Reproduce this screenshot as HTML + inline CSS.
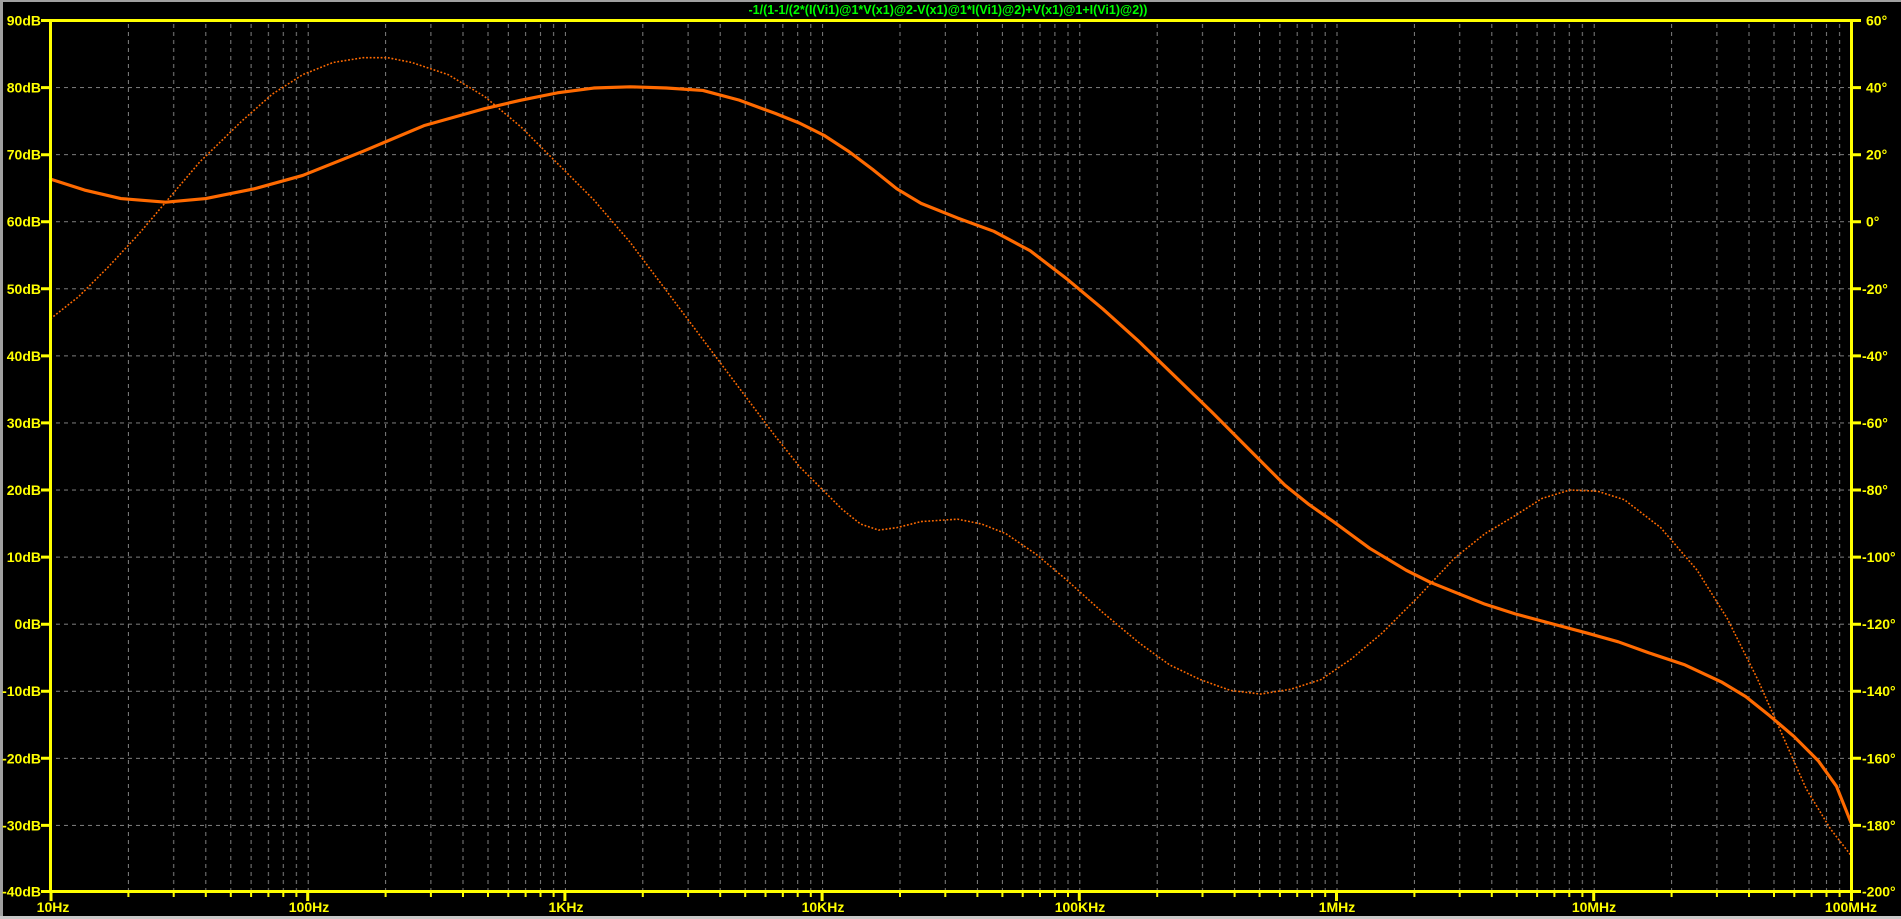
<!DOCTYPE html>
<html><head><meta charset="utf-8"><style>
html,body{margin:0;padding:0;background:#000;width:1901px;height:919px;overflow:hidden}
svg{display:block}
text{font-family:"Liberation Sans",sans-serif;font-weight:bold}
</style></head><body>
<svg width="1901" height="919" viewBox="0 0 1901 919" xmlns="http://www.w3.org/2000/svg">
<defs>
<pattern id="vg" patternUnits="userSpaceOnUse" x="50.5" y="0" width="257.2" height="919">
<g stroke="#808080" stroke-width="1" stroke-dasharray="4 4">
<line x1="0.5" y1="0" x2="0.5" y2="919"/>
<line x1="77.9" y1="0" x2="77.9" y2="919"/>
<line x1="123.2" y1="0" x2="123.2" y2="919"/>
<line x1="155.3" y1="0" x2="155.3" y2="919"/>
<line x1="180.3" y1="0" x2="180.3" y2="919"/>
<line x1="200.6" y1="0" x2="200.6" y2="919"/>
<line x1="217.9" y1="0" x2="217.9" y2="919"/>
<line x1="232.8" y1="0" x2="232.8" y2="919"/>
<line x1="245.9" y1="0" x2="245.9" y2="919"/>
</g></pattern>
<pattern id="hg" patternUnits="userSpaceOnUse" x="0" y="20" width="1901" height="67.077">
<line x1="0" y1="0.5" x2="1901" y2="0.5" stroke="#808080" stroke-width="1" stroke-dasharray="4 4"/>
</pattern>
</defs>
<rect x="0" y="0" width="1901" height="919" fill="#000"/>
<rect x="51" y="20" width="1800" height="872" fill="url(#vg)"/>
<rect x="51" y="20" width="1800" height="872" fill="url(#hg)"/>
<rect x="0" y="0" width="1901" height="2" fill="#a0a0a0"/>
<rect x="0" y="0" width="3" height="919" fill="#a0a0a0"/>
<rect x="0" y="916" width="1901" height="3" fill="#c8c8c8"/>

<g transform="translate(50.5,20) scale(1.2125,1.2145) translate(-42,-17)" fill="none">
<polyline stroke="#ff6a00" stroke-width="1.3" stroke-dasharray="1.5 1.5" stroke-linejoin="round"
points="42,263 65,245 90,220 115,193 137,167 165,134 200,100 225,78 250,62 275,52 300,48 320,48 340,52 370,62 400,80 430,105 460,135 490,165 520,200 550,240 580,280 610,320 640,360 660,385 680,405 695,420 710,432 725,437 740,435 760,430 790,428 810,432 830,440 855,457 880,478 910,505 940,530 965,548 990,560 1015,569 1040,572 1065,568 1090,560 1115,543 1140,522 1170,492 1200,460 1225,440 1250,425 1272,411 1295,404 1318,405 1340,412 1370,435 1400,470 1425,510 1450,560 1470,605 1490,650 1510,683 1527,705"/>
<polyline stroke="#ff6a00" stroke-width="2.6" stroke-linejoin="round" stroke-linecap="round"
points="42,148 70,157 100,164 137,167 170,164 210,156 250,145 300,125 350,104 400,90 430,83 460,77 490,73 520,72 550,73 580,75 610,83 640,94 660,102 680,112 700,125 720,140 740,156 760,168 790,180 820,191 850,207 880,230 910,255 940,282 970,311 1000,340 1030,370 1060,400 1080,416 1100,430 1130,452 1160,470 1180,480 1200,488 1225,498 1250,506 1280,514 1310,522 1335,529 1360,538 1390,548 1420,562 1440,574 1460,590 1480,607 1500,627 1515,648 1527,678"/>
</g>

<g fill="#ffff00">
<rect x="49" y="19" width="1805" height="3"/>
<rect x="49" y="890" width="1805" height="3"/>
<rect x="49" y="19" width="3" height="874"/>
<rect x="1850" y="19" width="3" height="874"/>
</g>
<g stroke="#ffff00" stroke-width="3">
<path d="M41 20.5H50M41 87.6H50M41 154.7H50M41 221.7H50M41 288.8H50M41 355.9H50M41 422.9H50M41 490H50M41 557.1H50M41 624.2H50M41 691.2H50M41 758.3H50M41 825.4H50M41 891.5H50"/>
<path d="M1852 20.5H1861M1852 87.6H1861M1852 154.7H1861M1852 221.7H1861M1852 288.8H1861M1852 355.9H1861M1852 422.9H1861M1852 490H1861M1852 557.1H1861M1852 624.2H1861M1852 691.2H1861M1852 758.3H1861M1852 825.4H1861M1852 891.5H1861"/>
</g>
<g stroke="#ffff00" stroke-width="2">
<path d="M128.4 892v5M173.7 892v5M205.8 892v5M230.8 892v5M251.1 892v5M268.4 892v5M283.3 892v5M296.4 892v5
M385.6 892v5M430.9 892v5M463 892v5M488 892v5M508.3 892v5M525.6 892v5M540.5 892v5M553.6 892v5
M642.8 892v5M688.1 892v5M720.2 892v5M745.2 892v5M765.5 892v5M782.8 892v5M797.7 892v5M810.8 892v5
M900 892v5M945.3 892v5M977.4 892v5M1002.4 892v5M1022.7 892v5M1040 892v5M1054.9 892v5M1068 892v5
M1157.2 892v5M1202.5 892v5M1234.6 892v5M1259.6 892v5M1279.9 892v5M1297.2 892v5M1312.1 892v5M1325.2 892v5
M1414.4 892v5M1459.7 892v5M1491.8 892v5M1516.8 892v5M1537.1 892v5M1554.4 892v5M1569.3 892v5M1582.4 892v5
M1671.6 892v5M1716.9 892v5M1749 892v5M1774 892v5M1794.3 892v5M1811.6 892v5M1826.5 892v5M1839.6 892v5"/>
</g>
<g stroke="#ffff00" stroke-width="3">
<path d="M51 892v9M307.7 892v9M564.9 892v9M822.1 892v9M1079.3 892v9M1336.5 892v9M1593.7 892v9M1851.5 892v9"/>
</g>

<g fill="#ffff00" font-size="14" text-anchor="end">
<text x="41" y="25.5">90dB</text>
<text x="41" y="92.6">80dB</text>
<text x="41" y="159.7">70dB</text>
<text x="41" y="226.7">60dB</text>
<text x="41" y="293.8">50dB</text>
<text x="41" y="360.9">40dB</text>
<text x="41" y="427.9">30dB</text>
<text x="41" y="495">20dB</text>
<text x="41" y="562.1">10dB</text>
<text x="41" y="629.2">0dB</text>
<text x="41" y="696.2">-10dB</text>
<text x="41" y="763.3">-20dB</text>
<text x="41" y="830.4">-30dB</text>
<text x="41" y="896.5">-40dB</text>
</g>
<g fill="#ffff00" font-size="14" text-anchor="start">
<text x="1866" y="25.5">60°</text>
<text x="1866" y="92.6">40°</text>
<text x="1866" y="159.7">20°</text>
<text x="1866" y="226.7">0°</text>
<text x="1862" y="293.8">-20°</text>
<text x="1862" y="360.9">-40°</text>
<text x="1862" y="427.9">-60°</text>
<text x="1862" y="495">-80°</text>
<text x="1862" y="562.1">-100°</text>
<text x="1862" y="629.2">-120°</text>
<text x="1862" y="696.2">-140°</text>
<text x="1862" y="763.3">-160°</text>
<text x="1862" y="830.4">-180°</text>
<text x="1862" y="896.5">-200°</text>
</g>
<g fill="#ffff00" font-size="14" text-anchor="middle">
<text x="53" y="912">10Hz</text>
<text x="309" y="912">100Hz</text>
<text x="566" y="912">1KHz</text>
<text x="823" y="912">10KHz</text>
<text x="1080" y="912">100KHz</text>
<text x="1337" y="912">1MHz</text>
<text x="1594" y="912">10MHz</text>
<text x="1851" y="912">100MHz</text>
</g>
<text x="948" y="14" fill="#00ff00" font-size="12.5" text-anchor="middle">-1/(1-1/(2*(I(Vi1)@1*V(x1)@2-V(x1)@1*I(Vi1)@2)+V(x1)@1+I(Vi1)@2))</text>
</svg>
</body></html>
